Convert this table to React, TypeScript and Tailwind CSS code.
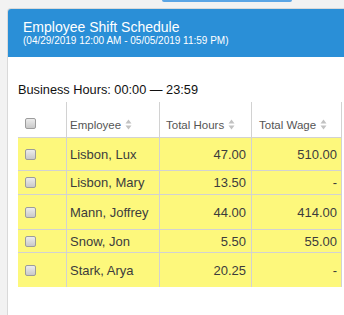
import React from "react";

const rows = [
  { name: "Lisbon, Lux", hours: "47.00", wage: "510.00", h: "h-[33px] border-b" },
  { name: "Lisbon, Mary", hours: "13.50", wage: "-", h: "h-[24px] border-b" },
  { name: "Mann, Joffrey", hours: "44.00", wage: "414.00", h: "h-[35px] border-b" },
  { name: "Snow, Jon", hours: "5.50", wage: "55.00", h: "h-[23px] border-b" },
  { name: "Stark, Arya", hours: "20.25", wage: "-", h: "h-[34px]" },
];

function Check() {
  return (
    <div className="w-[11px] h-[11px] rounded-[2px] border border-[#9c9c9c] bg-gradient-to-b from-[#ececec] to-[#c9c9c9]" />
  );
}

function Sort() {
  return (
    <svg width="7" height="11" viewBox="0 0 7 11" className="ml-[4px] mt-[1px]">
      <path d="M3.5 0.5 L6.5 4.5 L0.5 4.5 Z" fill="#c2c2c2" />
      <path d="M3.5 10.5 L6.5 6.5 L0.5 6.5 Z" fill="#c2c2c2" />
    </svg>
  );
}

export default function App() {
  return (
    <div className="w-[344px] h-[315px] bg-[#f2f2f2] overflow-hidden font-['Liberation_Sans',Arial,sans-serif]">
      <div className="h-[8px] flex">
        <div className="ml-[162px] w-[130px] h-[2px] bg-[#5aa5e5] rounded-b-[2px]" />
      </div>
      <div className="ml-[7px] h-[307px] bg-white border-l border-t border-[#d9d9d9] rounded-tl-[4px] overflow-hidden">
        <div className="bg-[#2a8fd7] h-[48px] pl-[15px] pt-[10px] text-white">
          <div className="text-[14px] leading-[16px]">Employee Shift Schedule</div>
          <div className="text-[10px] leading-[11px]">(04/29/2019 12:00 AM - 05/05/2019 11:59 PM)</div>
        </div>
        <div className="mt-[25px] pl-[10px] text-[12.75px] leading-[15px] text-[#111]">
          Business Hours: 00:00 — 23:59
        </div>
        <div className="mt-[5px] ml-[10px] w-[324px]">
          <div className="flex h-[36px] border-b border-[#d2d2d2] bg-white text-[11.5px] leading-[14px] text-[#555]">
            <div className="w-[49px] border-r border-[#d2d2d2] pl-[7px] pt-[16px]">
              <Check />
            </div>
            <div className="w-[93px] border-r border-[#d2d2d2] pl-[3px] pt-[16px] flex items-start">
              <span>Employee</span>
              <Sort />
            </div>
            <div className="w-[92px] border-r border-[#d2d2d2] pl-[6px] pt-[16px] flex items-start">
              <span>Total Hours</span>
              <Sort />
            </div>
            <div className="w-[90px] border-r border-[#d2d2d2] pl-[7px] pt-[16px] flex items-start">
              <span>Total Wage</span>
              <Sort />
            </div>
          </div>
          {rows.map((r) => (
            <div
              key={r.name}
              className={`flex ${r.h} border-[#d2d2d2] bg-[#fdf87c] text-[13px] leading-[15px] text-[#3c3c3c]`}
            >
              <div className="w-[49px] border-r border-[#d2d2d2] pl-[7px] flex items-center">
                <Check />
              </div>
              <div className="w-[93px] border-r border-[#d2d2d2] pl-[3px] flex items-center">
                {r.name}
              </div>
              <div className="w-[92px] border-r border-[#d2d2d2] pr-[5px] flex items-center justify-end">
                {r.hours}
              </div>
              <div className="w-[90px] border-r border-[#d2d2d2] pr-[4px] flex items-center justify-end">
                {r.wage}
              </div>
            </div>
          ))}
        </div>
      </div>
    </div>
  );
}
